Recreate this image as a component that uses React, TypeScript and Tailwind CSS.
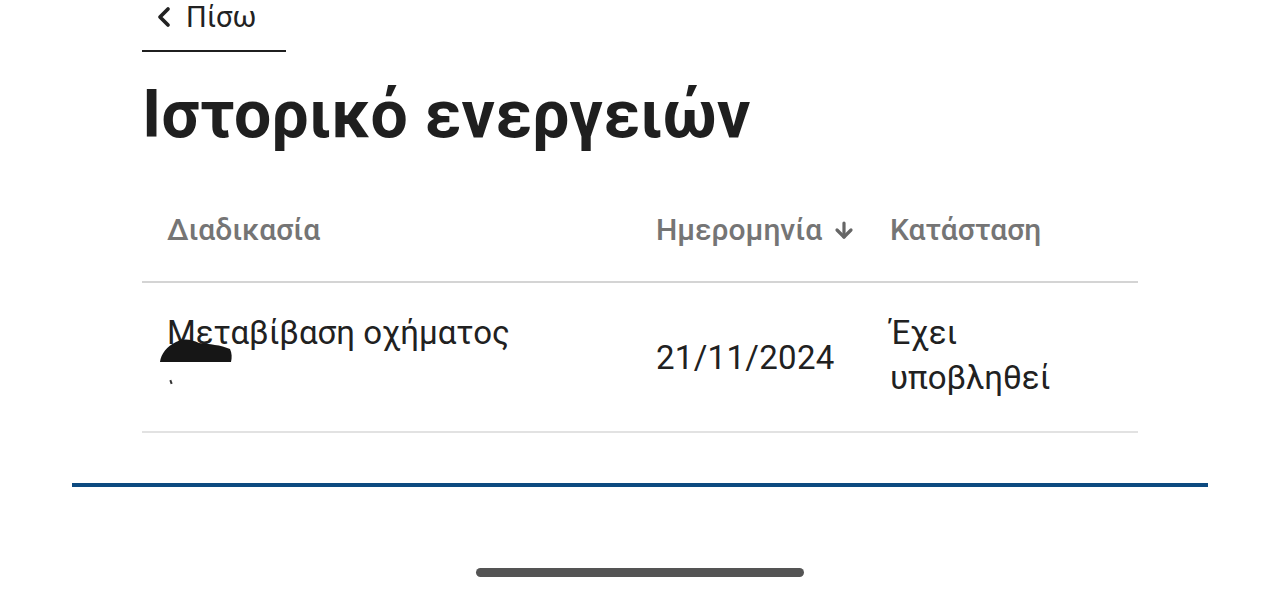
import { ArrowDown, ChevronLeft } from "lucide-react";

export default function App() {
  return (
    <div
      className="relative w-[1280px] h-[591px] overflow-hidden bg-white text-[#212121]"
      style={{ fontFamily: "Roboto, 'Noto Sans', sans-serif" }}
    >
      <div className="ml-[142px] w-[996px]">
        {/* back link */}
        <a className="flex h-[52px] w-[144px] items-center gap-[6px] border-b-2 border-[#1f1f1f] pl-[6px] pb-[16px] pt-0 text-[29px] leading-[36px] text-[#222]">
          <ChevronLeft size={32} strokeWidth={2.8} />
          <span>Πίσω</span>
        </a>

        <h1 className="mt-[22px] text-[66px] font-bold leading-[82px] tracking-[0.2px] text-[#1f1f1f]">
          Ιστορικό ενεργειών
        </h1>

        {/* table */}
        <div className="mt-[34px]">
          <div className="grid grid-cols-[489px_234px_273px] border-b-2 border-[#d4d4d4] pt-[22px] pb-[33px] text-[30px] font-medium leading-[36px] text-[#757575]">
            <div className="pl-[25px]">Διαδικασία</div>
            <div className="flex items-center gap-[10px] pl-[25px]">
              <span>Ημερομηνία</span>
              <ArrowDown size={24} strokeWidth={3.2} className="text-[#666]" />
            </div>
            <div className="pl-[25px]">Κατάσταση</div>
          </div>

          <div className="grid h-[150px] grid-cols-[489px_234px_273px] items-center border-b-2 border-[#e2e2e2] text-[33px] leading-[45px]">
            <div className="relative -mt-[4px] pl-[25px]">
              <div>Μεταβίβαση οχήματος</div>
              <div className="h-[45px]" />
              {/* redacted plate */}
              <svg
                className="absolute left-[17px] top-[27px]"
                width="74"
                height="26"
                viewBox="0 0 74 26"
              >
                <path
                  d="M1 25 C2 17 8 9 17 5 C24 1 32 2 40 6 C50 7 62 8 71 12 C73 16 73 21 72 25 Z"
                  fill="#161616"
                />
              </svg>
              <div className="absolute left-[28px] top-[70px] h-[4px] w-[2px] rotate-[-20deg] bg-[#333]" />
            </div>
            <div className="pl-[25px] tracking-[0.3px]">21/11/2024</div>
            <div className="-mt-[4px] pl-[25px]">
              <div>Έχει</div>
              <div>υποβληθεί</div>
            </div>
          </div>
        </div>
      </div>

      {/* footer rule */}
      <div className="mx-[72px] mt-[50px] h-[4px] bg-[#0d4a80]" />

      {/* home indicator */}
      <div className="mx-auto mt-[81px] h-[9px] w-[328px] rounded-full bg-[#545454]" />
    </div>
  );
}
